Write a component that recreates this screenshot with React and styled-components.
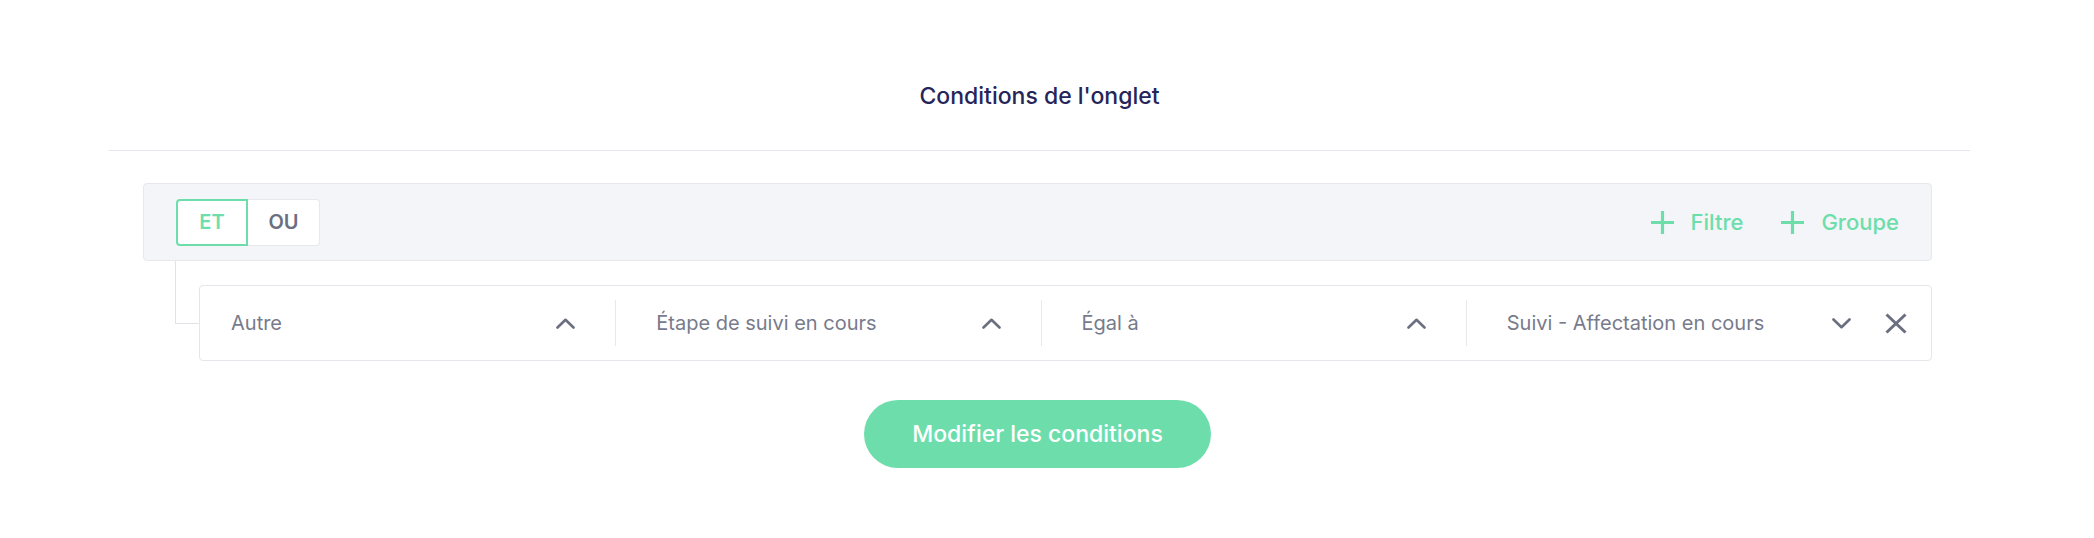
import React from 'react';
import styled, { createGlobalStyle } from 'styled-components';

const GREEN = '#6ddeab';

const GlobalStyle = createGlobalStyle`
    body {
        margin: 0;
        background: #ffffff;
        font-family: Inter, "Noto Sans", sans-serif;
    }
`;

/* Page */
const Container = styled.div`
    width: 1861px;
    margin-left: 109px;
    padding-top: 81px;
    padding-bottom: 68px;
`;

const Title = styled.h2`
    margin: 0;
    text-align: center;
    font-size: 23px;
    line-height: 30px;
    font-weight: 500;
    color: #26255a;
`;

const Divider = styled.hr`
    margin: 39px 0 0;
    border: 0;
    height: 1px;
    background: #e4e6eb;
`;

const Body = styled.div`
    padding: 32px 38px 0 34px;
`;

/* Group header */
const GroupBar = styled.div`
    display: flex;
    align-items: center;
    justify-content: space-between;
    height: 78px;
    box-sizing: border-box;
    padding: 0 32px;
    background: #f4f5f8;
    border: 1px solid #e6e8ee;
    border-radius: 4px;
`;

const Toggle = styled.div`
    display: flex;
`;

const ToggleButton = styled.button`
    width: 72px;
    height: 47px;
    box-sizing: border-box;
    font-family: inherit;
    font-size: 20px;
    font-weight: 600;
    background: #ffffff;
    color: ${props => (props.active ? GREEN : '#6b6f82')};
    border: ${props => (props.active ? `2px solid ${GREEN}` : '1px solid #e6e8ee')};
    border-left-width: ${props => (props.active ? '2px' : '0')};
    border-radius: ${props => (props.active ? '4px 0 0 4px' : '0 4px 4px 0')};
    padding: 0;
`;

const Actions = styled.div`
    display: flex;
    align-items: center;
    gap: 38px;
`;

const AddButton = styled.button`
    display: flex;
    align-items: center;
    gap: 17px;
    padding: 0;
    border: 0;
    background: none;
    font-family: inherit;
    font-size: 22px;
    font-weight: 500;
    color: ${GREEN};
`;

/* Condition row */
const Child = styled.div`
    display: flex;
    align-items: flex-start;
`;

const Connector = styled.div`
    flex: none;
    width: 23px;
    height: 62px;
    margin-left: 32px;
    border-left: 1px solid #e1e3e8;
    border-bottom: 1px solid #e1e3e8;
`;

const ConditionRow = styled.div`
    flex: 1;
    display: flex;
    align-items: center;
    height: 76px;
    box-sizing: border-box;
    margin-top: 24px;
    padding-right: 24px;
    background: #ffffff;
    border: 1px solid #e4e6eb;
    border-radius: 4px;
`;

const Select = styled.div`
    flex: 1 1 0;
    display: flex;
    align-items: center;
    justify-content: space-between;
    padding: 0 ${props => (props.last ? '0' : '40px')} 0 ${props => (props.first ? '31px' : '40px')};
    font-size: 20px;
    color: #777b8c;
    white-space: nowrap;
`;

const Separator = styled.div`
    flex: none;
    width: 1px;
    height: 46px;
    background: #e6e8ec;
`;

const RemoveButton = styled.button`
    display: flex;
    padding: 0;
    margin-left: 34px;
    border: 0;
    background: none;
`;

const Footer = styled.div`
    display: flex;
    justify-content: center;
    margin-top: 39px;
`;

const SubmitButton = styled.button`
    height: 68px;
    padding: 0 48px;
    border: 0;
    border-radius: 34px;
    background: ${GREEN};
    color: #ffffff;
    font-family: inherit;
    font-size: 23px;
    font-weight: 500;
`;

const Chevron = ({ up }) => (
    <svg width="19" height="11" viewBox="0 0 19 11" fill="none">
        <path
            d={up ? 'M1.5 9.5 L9.5 1.8 L17.5 9.5' : 'M1.5 1.5 L9.5 9.2 L17.5 1.5'}
            stroke="#6b6f80"
            strokeWidth="2.6"
            strokeLinecap="round"
            strokeLinejoin="round"
        />
    </svg>
);

const Plus = () => (
    <svg width="23" height="23" viewBox="0 0 23 23" fill="none">
        <path d="M11.5 0 V23 M0 11.5 H23" stroke={GREEN} strokeWidth="3.2" />
    </svg>
);

const Cross = () => (
    <svg width="22" height="21" viewBox="0 0 22 21" fill="none">
        <path d="M1.5 1.5 L20.5 19.5 M20.5 1.5 L1.5 19.5" stroke="#6b6f80" strokeWidth="3" />
    </svg>
);

const fields = [
    { label: 'Autre', open: true },
    { label: 'Étape de suivi en cours', open: true },
    { label: 'Égal à', open: true },
    { label: 'Suivi - Affectation en cours', open: false }
];

export default function App() {
    return (
        <Container>
            <GlobalStyle />
            <Title>Conditions de l'onglet</Title>
            <Divider />
            <Body>
                <GroupBar>
                    <Toggle>
                        <ToggleButton active>ET</ToggleButton>
                        <ToggleButton>OU</ToggleButton>
                    </Toggle>
                    <Actions>
                        <AddButton><Plus />Filtre</AddButton>
                        <AddButton><Plus />Groupe</AddButton>
                    </Actions>
                </GroupBar>
                <Child>
                    <Connector />
                    <ConditionRow>
                        {fields.map((field, i) => (
                            <React.Fragment key={field.label}>
                                {i > 0 && <Separator />}
                                <Select first={i === 0} last={i === fields.length - 1}>
                                    {field.label}
                                    <Chevron up={field.open} />
                                </Select>
                            </React.Fragment>
                        ))}
                        <RemoveButton><Cross /></RemoveButton>
                    </ConditionRow>
                </Child>
                <Footer>
                    <SubmitButton>Modifier les conditions</SubmitButton>
                </Footer>
            </Body>
        </Container>
    );
}
